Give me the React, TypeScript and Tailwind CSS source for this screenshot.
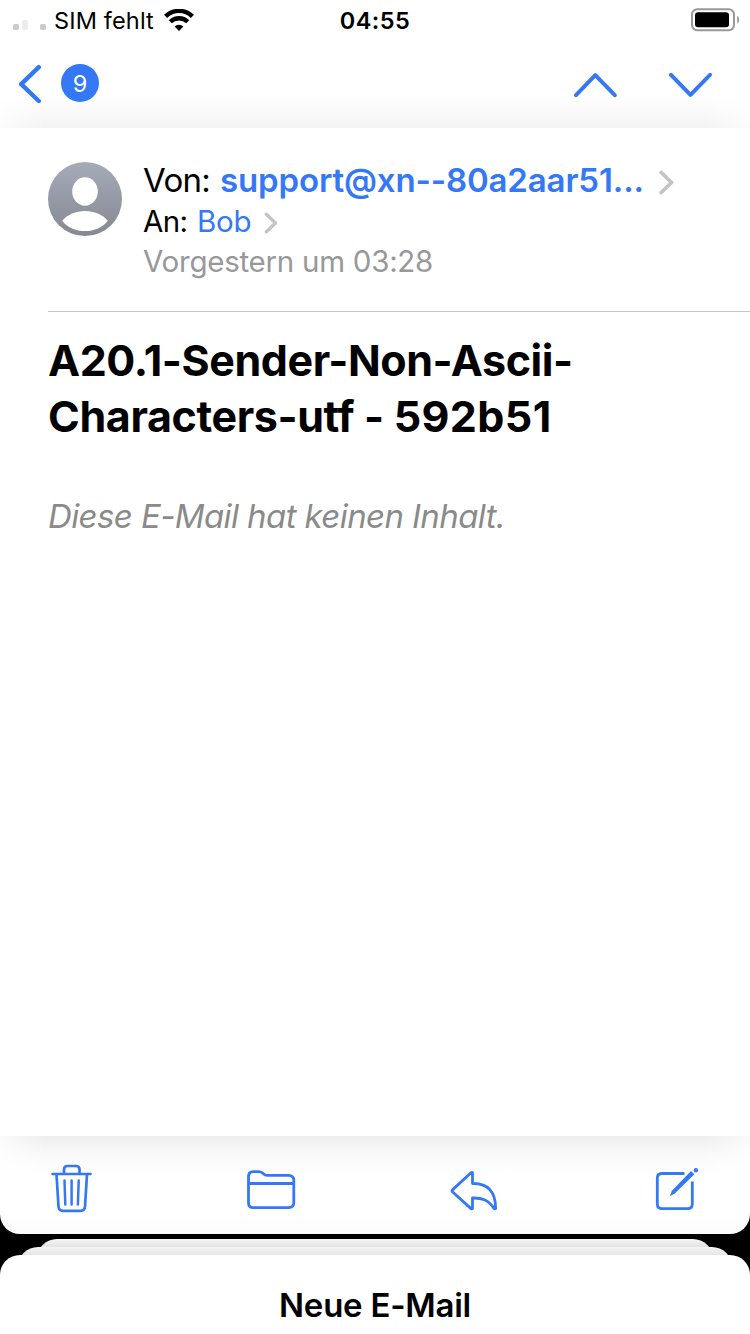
import React from "react";

function StatusBar() {
  return (
    <div className="flex h-10 items-center justify-between text-[23.5px] leading-10 text-black">
      <div className="flex w-[240px] items-center pl-[13px]">
        <svg width="34" height="20" viewBox="0 0 34 20" className="mt-[1px] shrink-0">
          <rect x="0" y="13" width="6" height="6" rx="1.8" fill="#cbcbcb" />
          <rect x="9" y="9" width="6" height="10" rx="1.8" fill="#ececec" />
          <rect x="27" y="13" width="6" height="6" rx="1.8" fill="#cbcbcb" />
        </svg>
        <span className="ml-[7px] mt-[2px] whitespace-nowrap tracking-[0.15px]">SIM fehlt</span>
        <svg width="30" height="22" viewBox="0 0 30 22" className="ml-[10px] shrink-0">
          <g fill="none" stroke="#000" strokeWidth="4.4">
            <path d="M1.6 7.4A19 19 0 0 1 28.4 7.4" />
            <path d="M6.3 12.8A12.3 12.3 0 0 1 23.7 12.8" />
          </g>
          <path d="M10.6 17.6A6.3 6.3 0 0 1 19.4 17.6L15 22Z" fill="#000" />
        </svg>
      </div>
      <span className="mt-[2px] font-semibold tracking-[0.5px]">04:55</span>
      <div className="flex w-[240px] justify-end pr-[10px]">
        <svg width="49" height="24" viewBox="0 0 49 24">
          <rect x="1" y="1.2" width="42" height="21" rx="5.2" fill="none" stroke="#999" strokeWidth="2" />
          <rect x="4" y="4.2" width="34" height="15" rx="3" fill="#000" />
          <path d="M46.2 8v7.4c1.4-.6 2-2 2-3.7s-.6-3.1-2-3.7Z" fill="#999" />
        </svg>
      </div>
    </div>
  );
}

function NavBar() {
  return (
    <div className="relative flex h-[88px] items-start justify-between">
      <div className="absolute inset-x-0 bottom-0 h-[34px] bg-[linear-gradient(#ffffff,#fafafa_50%,#f3f3f3)] [mask-image:linear-gradient(to_right,#0004,black_45px,black_705px,#0004)]" />
      <div className="relative flex pl-[18px] pt-[24px]">
        <svg width="25" height="40" viewBox="0 0 25 40" fill="none" stroke="#3478f6" strokeWidth="4.4" strokeLinecap="round" strokeLinejoin="round">
          <path d="M20.8 3.2L3.2 20.2L20.8 37" />
        </svg>
        <span className="ml-[18px] flex h-[38px] w-[38px] items-center justify-center rounded-full bg-[#3478f6] pt-[2px] text-[23.5px] leading-[36px] text-white">9</span>
      </div>
      <svg width="180" height="60" viewBox="570 40 180 60" className="relative" fill="none" stroke="#3478f6" strokeWidth="4" strokeLinecap="round" strokeLinejoin="round">
        <path d="M576 95.2L595.3 75.2L614.8 95.2" />
        <path d="M671 74.8L690.5 94.8L710 74.8" />
      </svg>
    </div>
  );
}

function Chevron({ width, height }: { width: number; height: number }) {
  return (
    <svg width={width} height={height} viewBox="0 0 15 25" fill="none" stroke="#c4c4c7" strokeWidth="3.8" strokeLinecap="round" strokeLinejoin="round">
      <path d="M2.2 2.5L12.6 12.5L2.2 22.5" />
    </svg>
  );
}

function Avatar() {
  return (
    <svg width="74" height="74" viewBox="0 0 74 74" className="mt-[2px] shrink-0">
      <defs>
        <linearGradient id="avatar" x1="0" y1="0" x2="0" y2="1">
          <stop offset="0" stopColor="#a6abb9" />
          <stop offset="1" stopColor="#848891" />
        </linearGradient>
      </defs>
      <circle cx="37" cy="37" r="37" fill="url(#avatar)" />
      <ellipse cx="37" cy="29.5" rx="12.8" ry="14.2" fill="#fff" />
      <path d="M14.2 58.7C19.5 52.5 28 49 37 49s17.5 3.5 22.8 9.7C54.5 65.5 46.5 69 37 69S19.5 65.5 14.2 58.7Z" fill="#fff" />
    </svg>
  );
}

function MessageHeader() {
  return (
    <div className="ml-12 flex h-[184px] border-b border-[#c6c6c8] pt-8">
      <Avatar />
      <div className="ml-[21px] flex flex-col whitespace-nowrap">
        <div className="flex h-10 items-center text-[33px] leading-10">
          <span className="w-[66px] tracking-[-0.7px]">Von:</span>
          <span className="ml-[11px] font-semibold tracking-[-0.14px] text-[#3478f6]">support@xn--80a2aar51...</span>
          <span className="ml-[15px] mt-[5px]"><Chevron width={15} height={25} /></span>
        </div>
        <div className="flex h-[41px] items-center pt-[2px] text-[29.5px] leading-[39px]">
          <span className="w-[45px] tracking-[-0.6px]">An:</span>
          <span className="ml-[9px] tracking-[-0.2px] text-[#3478f6]">Bob</span>
          <span className="ml-[13px] mt-[3px]"><Chevron width={14} height={22} /></span>
        </div>
        <div className="text-[29.5px] leading-10 tracking-[-0.26px] text-[#98989a]">Vorgestern um 03:28</div>
      </div>
    </div>
  );
}

function Toolbar() {
  return (
    <div className="relative h-[98px] overflow-hidden rounded-b-[20px] bg-[linear-gradient(#ffffff_80%,#fbfbfb)]">
      <div className="absolute inset-x-0 top-0 h-10 bg-[linear-gradient(#eeeeee,#f9f9f9_45%,#ffffff)] [mask-image:linear-gradient(to_right,#0004,black_45px,black_705px,#0004)]" />
      <div className="relative flex items-start justify-between px-[51px] pt-[28px] text-[#3478f6]">
        <svg width="41" height="50" viewBox="0 0 41 50" fill="none" stroke="currentColor" strokeWidth="2.7" strokeLinecap="round" strokeLinejoin="round">
          <path d="M1.5 10H39.5M13 9.5V5.5Q13 2 16.5 2H25Q28.5 2 28.5 5.5V9.5" />
          <path d="M5.5 10.5L7.5 42.5Q7.8 46.8 12 46.8H29.5Q33.7 46.8 34 42.5L36 10.5" />
          <path d="M13.5 16.5L14.3 40.5M20.6 16.5V40.5M27.7 16.5L26.9 40.5" strokeWidth="2.5" />
        </svg>
        <svg width="49" height="50" viewBox="247 1164 49 50" fill="none" stroke="currentColor" strokeWidth="2.8" strokeLinejoin="round">
          <path d="M248.5 1203V1176.5Q248.5 1171.600 253.400 1171.600H258.500Q261 1171.600 262.600 1173.100L263.600 1174Q265 1175.400 267 1175.400H288.500Q293.800 1175.400 293.800 1180.500V1202.500Q293.800 1207.600 288.700 1207.600H253.400Q248.500 1207.600 248.500 1203ZM248.500 1183.500H293.800" />
        </svg>
        <svg width="48" height="50" viewBox="452 1164 48 50" className="overflow-visible" fill="none" stroke="currentColor" strokeWidth="2.800" strokeLinejoin="round">
          <path d="M472.500 1172.600V1183.500C488 1183 495.500 1192 495.700 1208.500Q494.800 1209.300 494 1208.500C488.500 1200 482.500 1197.700 472.500 1198V1208.500Q472 1209.300 471 1208.600L452.700 1192Q451.600 1190.800 452.700 1189.600L471 1172.800Q472 1172 472.500 1172.600Z" />
        </svg>
        <svg width="44" height="50" viewBox="655 1164 44 50" fill="none" stroke="currentColor" strokeWidth="2.800">
          <path d="M684.500 1173.500H662Q657.300 1173.500 657.300 1178.200V1204Q657.300 1208.700 662 1208.700H687.500Q692.300 1208.700 692.300 1204V1181.500" />
          <path d="M691 1170.900L694.400 1174.300L674.800 1193.600L669.700 1196.200L671.900 1190.800Z" fill="currentColor" stroke="none" />
          <circle cx="695.900" cy="1170.200" r="2.200" fill="currentColor" stroke="none" />
        </svg>
      </div>
    </div>
  );
}

export default function App() {
  return (
    <div className="flex h-[1334px] w-[750px] flex-col overflow-hidden bg-black font-['Inter','Liberation_Sans',sans-serif] text-black">
      <div className="bg-white">
        <StatusBar />
        <NavBar />
      </div>
      <main className="h-[1008px] bg-white">
        <MessageHeader />
        <h1 className="ml-12 pt-[20px] text-[43px] font-bold leading-[56px]">
          <span className="block tracking-[-0.42px]">A20.1-Sender-Non-Ascii-</span>
          <span className="block tracking-[-0.38px]">
            Characters-utf - <span className="tracking-[0.4px]">592b51</span>
          </span>
        </h1>
        <p className="ml-12 mt-[52px] text-[33px] italic leading-10 tracking-[-0.6px] text-[#8a8a8a]">Diese E-Mail hat keinen Inhalt.</p>
      </main>
      <Toolbar />
      <div className="mt-[5px] h-2 overflow-hidden px-[37px]">
        <div className="h-10 rounded-t-[20px] bg-[linear-gradient(#f6f6f6_0px,#e2e2e2_8px)]" />
      </div>
      <div className="h-2 overflow-hidden px-[18px]">
        <div className="h-10 rounded-t-[20px] bg-[linear-gradient(#f4f4f4_0px,#e6e6e6_8px)]" />
      </div>
      <div className="h-[79px] rounded-t-[20px] bg-white pt-[30px] text-center text-[33px] font-semibold leading-10 tracking-[-0.25px]">Neue E-Mail</div>
    </div>
  );
}
